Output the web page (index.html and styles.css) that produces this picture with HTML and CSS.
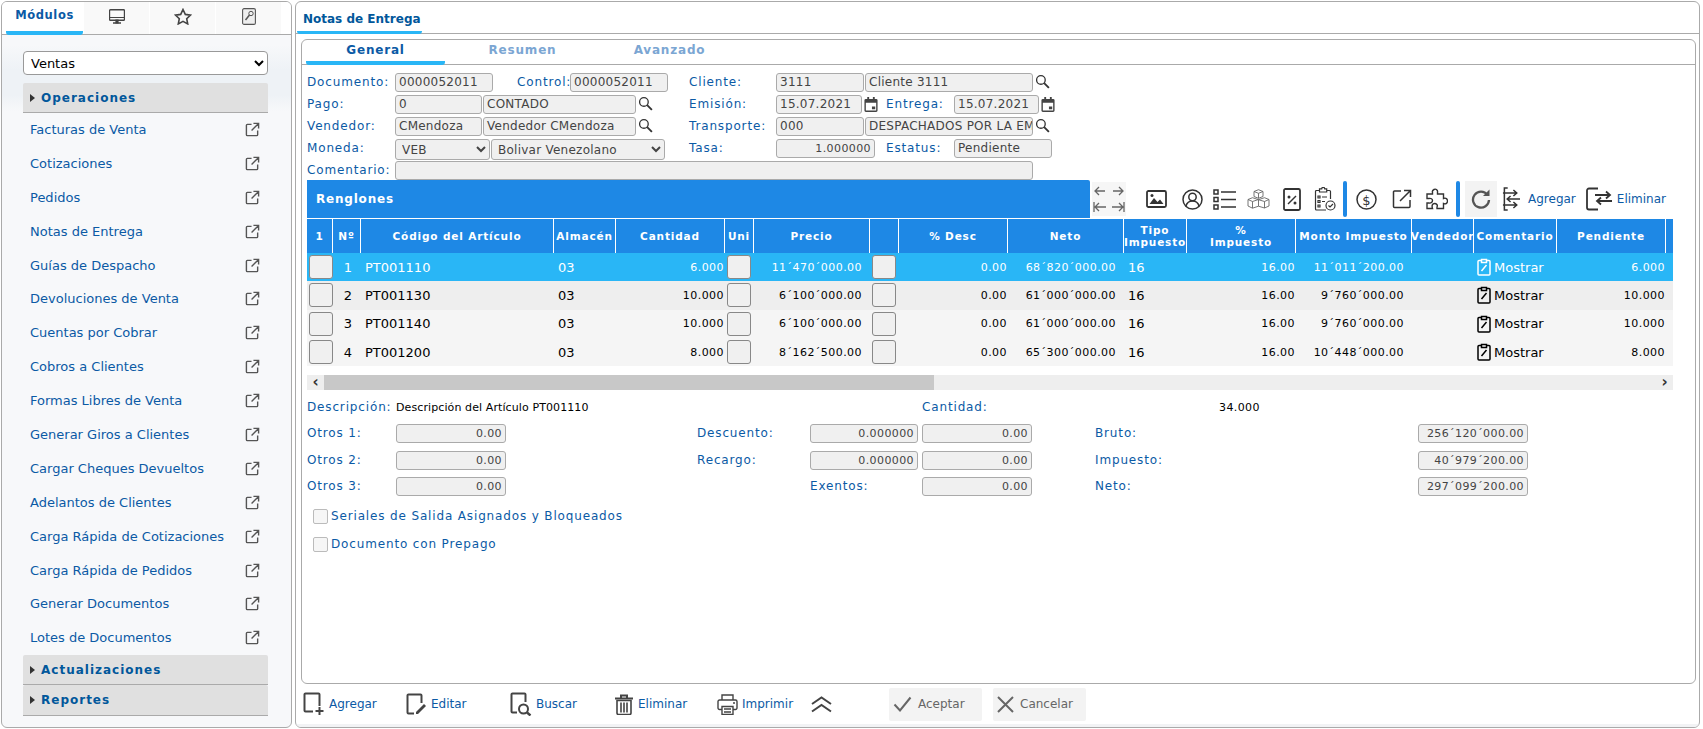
FILE: index.html
```html
<!DOCTYPE html>
<html lang="es">
<head>
    <meta charset="UTF-8">
    <title>Notas de Entrega</title>
    <link rel="stylesheet" href="styles.css">
</head>
<body>
    <svg class="defs" width="0" height="0">
        <symbol id="i-ext" viewBox="0 0 16 16"><path d="M7 2.5H2.5a1 1 0 0 0-1 1v10a1 1 0 0 0 1 1h10a1 1 0 0 0 1-1V9M9 1.5h5.5V7M14.5 1.5 7 9" fill="none" stroke="currentColor" stroke-width="1.5"/></symbol>
        <symbol id="i-search" viewBox="0 0 16 16"><circle cx="6.3" cy="6.3" r="4.6" fill="none" stroke="currentColor" stroke-width="1.4"/><path d="m9.8 9.8 5 5" stroke="currentColor" stroke-width="2"/></symbol>
        <symbol id="i-cal" viewBox="0 0 14 16"><path d="M3 0h2v2h4V0h2v2h1.5A1.5 1.5 0 0 1 14 3.500V14.500A1.500 1.500 0 0 1 12.500 16h-11A1.500 1.500 0 0 1 0 14.500V3.500A1.500 1.500 0 0 1 1.500 2H3zM1.500 6v8.500h11V6zM8 10h3.500v3H8z" fill="currentColor" fill-rule="evenodd"/></symbol>
        <symbol id="i-note" viewBox="0 0 14 18"><path d="M4.500 2.500H2a1 1 0 0 0-1 1V16a1 1 0 0 0 1 1h10a1 1 0 0 0 1-1V3.500a1 1 0 0 0-1-1H9.500M4.500 1.500h5v3h-5zM4.500 13l5-6" fill="none" stroke="currentColor" stroke-width="1.5"/></symbol>
    </svg>

    <div class="app">
        <aside class="side">
            <div class="side-tabs">
                <div class="side-tab active">Módulos</div>
                <div class="side-tab">
                    <svg width="16" height="15" viewBox="0 0 16 15"><path d="M1.500.7h13a1 1 0 0 1 1 1v8.600a1 1 0 0 1-1 1h-13a1 1 0 0 1-1-1V1.700a1 1 0 0 1 1-1zM4 14h8" fill="none" stroke="#444" stroke-width="1.400"/><path d="M.5 8.500h15M7 11h2v3H7z" stroke="#444" stroke-width="1.200" fill="#444"/></svg>
                </div>
                <div class="side-tab">
                    <svg width="18" height="17" viewBox="0 0 18 17"><path d="m9 1.500 2.300 4.900 5.200.7-3.800 3.600 1 5.200L9 13.300l-4.700 2.600 1-5.200L1.500 7.100l5.200-.7z" fill="none" stroke="#444" stroke-width="1.600"/></svg>
                </div>
                <div class="side-tab">
                    <svg width="14" height="17" viewBox="0 0 14 17"><rect x=".6" y=".6" width="12.800" height="15.800" rx="1.500" fill="#eee" stroke="#555" stroke-width="1.100"/><circle cx="9" cy="5.500" r="2.200" fill="none" stroke="#555"/><path d="M7.500 7 3.500 12" stroke="#555" stroke-width="1.500"/></svg>
                </div>
            </div>
            <div class="side-body">
                <select class="module-select"><option>Ventas</option></select>
                <div class="group first"><span class="caret"></span>Operaciones</div>
                <ul class="links">
                    <li>Facturas de Venta<svg class="ext"><use href="#i-ext"/></svg></li>
                    <li>Cotizaciones<svg class="ext"><use href="#i-ext"/></svg></li>
                    <li>Pedidos<svg class="ext"><use href="#i-ext"/></svg></li>
                    <li>Notas de Entrega<svg class="ext"><use href="#i-ext"/></svg></li>
                    <li>Guías de Despacho<svg class="ext"><use href="#i-ext"/></svg></li>
                    <li>Devoluciones de Venta<svg class="ext"><use href="#i-ext"/></svg></li>
                    <li>Cuentas por Cobrar<svg class="ext"><use href="#i-ext"/></svg></li>
                    <li>Cobros a Clientes<svg class="ext"><use href="#i-ext"/></svg></li>
                    <li>Formas Libres de Venta<svg class="ext"><use href="#i-ext"/></svg></li>
                    <li>Generar Giros a Clientes<svg class="ext"><use href="#i-ext"/></svg></li>
                    <li>Cargar Cheques Devueltos<svg class="ext"><use href="#i-ext"/></svg></li>
                    <li>Adelantos de Clientes<svg class="ext"><use href="#i-ext"/></svg></li>
                    <li>Carga Rápida de Cotizaciones<svg class="ext"><use href="#i-ext"/></svg></li>
                    <li>Carga Rápida de Pedidos<svg class="ext"><use href="#i-ext"/></svg></li>
                    <li>Generar Documentos<svg class="ext"><use href="#i-ext"/></svg></li>
                    <li>Lotes de Documentos<svg class="ext"><use href="#i-ext"/></svg></li>
                </ul>
                <div class="group"><span class="caret"></span>Actualizaciones</div>
                <div class="group"><span class="caret"></span>Reportes</div>
            </div>
        </aside>

        <main class="main">
            <div class="main-tabs"><div class="main-tab">Notas de Entrega</div></div>

            <section class="doc">
                <div class="doc-tabs">
                    <div class="doc-tab active">General</div>
                    <div class="doc-tab">Resumen</div>
                    <div class="doc-tab">Avanzado</div>
                </div>

                <div class="form">
                    <div class="form-row">
                        <div class="form-left">
                            <span class="lbl">Documento:</span><span class="fld w98">0000052011</span>
                            <span class="lbl-mid">Control:</span><span class="fld w98">0000052011</span>
                        </div>
                        <div class="form-right">
                            <span class="lbl-right">Cliente:</span><span class="fld w88">3111</span><span class="fld w168">Cliente 3111</span>
                            <svg class="search"><use href="#i-search"/></svg>
                        </div>
                    </div>
                    <div class="form-row">
                        <div class="form-left">
                            <span class="lbl">Pago:</span><span class="fld w87">0</span><span class="fld w153">CONTADO</span>
                            <svg class="search"><use href="#i-search"/></svg>
                        </div>
                        <div class="form-right">
                            <span class="lbl-right">Emisión:</span>
                            <div class="cell-a"><span class="fld w86">15.07.2021</span><svg class="cal"><use href="#i-cal"/></svg></div>
                            <span class="lbl-sub">Entrega:</span><span class="fld w85">15.07.2021</span><svg class="cal"><use href="#i-cal"/></svg>
                        </div>
                    </div>
                    <div class="form-row">
                        <div class="form-left">
                            <span class="lbl">Vendedor:</span><span class="fld w87">CMendoza</span><span class="fld w153">Vendedor CMendoza</span>
                            <svg class="search"><use href="#i-search"/></svg>
                        </div>
                        <div class="form-right">
                            <span class="lbl-right">Transporte:</span><span class="fld w88">000</span><span class="fld w168">DESPACHADOS POR LA EMPRESA</span>
                            <svg class="search"><use href="#i-search"/></svg>
                        </div>
                    </div>
                    <div class="form-row">
                        <div class="form-left">
                            <span class="lbl">Moneda:</span>
                            <select class="sel w95"><option>VEB</option></select>
                            <select class="sel w174"><option>Bolivar Venezolano</option></select>
                        </div>
                        <div class="form-right">
                            <span class="lbl-right">Tasa:</span>
                            <div class="cell-a"><span class="fld w99 num">1.000000</span></div>
                            <span class="lbl-sub">Estatus:</span><span class="fld w98">Pendiente</span>
                        </div>
                    </div>
                    <div class="form-row-wide">
                        <span class="lbl">Comentario:</span><span class="fld w638"></span>
                    </div>
                </div>

                <div class="bar">
                    <div class="bar-title">Renglones</div>
                    <div class="bar-tools">
                        <div class="arrows">
                            <svg width="34" height="34" viewBox="0 0 34 34"><path d="M3 9h10M7 5 3 9l4 4M21 9h10M27 5l4 4-4 4M3 25h11M7 21l-4 4 4 4M2 20v10M20 25h11M27 21l4 4-4 4M32 20v10" fill="none" stroke="#666" stroke-width="1.300"/></svg>
                        </div>
                        <svg class="tool t1" width="21" height="18" viewBox="0 0 21 18"><rect x="1" y="1" width="19" height="16" rx="1.500" fill="none" stroke="#333" stroke-width="1.800"/><path d="m3.500 14 4.500-6 3.500 4 2.500-2.500 3.500 4.500z" fill="#333"/><circle cx="6" cy="5.500" r="1.500" fill="#333"/></svg>
                        <svg class="tool t2" width="21" height="21" viewBox="0 0 21 21"><circle cx="10.500" cy="10.500" r="9.500" fill="none" stroke="#333" stroke-width="1.500"/><circle cx="10.500" cy="8" r="3.700" fill="none" stroke="#333" stroke-width="1.500"/><path d="M4 17c1-3.500 3.500-5 6.500-5s5.500 1.500 6.500 5" fill="none" stroke="#333" stroke-width="1.500"/></svg>
                        <svg class="tool t3" width="23" height="21" viewBox="0 0 23 21"><path d="M1 1h4v4H1zM1 8.500h4v4H1zM1 16h4v4H1zM8 3h15M8 10.500h15M8 18h15" fill="none" stroke="#333" stroke-width="1.500"/></svg>
                        <svg class="tool t4" width="23" height="20" viewBox="0 0 23 20"><path d="M7 2.500 11.500.7 16 2.500v5l-4.500 1.800L7 7.500zM7 2.500l4.500 1.800L16 2.500M11.500 4.300v5M1 10.500l4.500-1.800 6 2v6.500l-6 2L1 17zM1 10.500l4.500 2 6-2M5.500 12.500v6.500M11.500 10.700l6-2 4.500 1.800V17l-4.500 2-6-1.800M11.500 10.700l6 1.800 4.500-2M17.500 12.500V19" fill="none" stroke="#666" stroke-width=".9"/></svg>
                        <svg class="tool t5" width="18" height="23" viewBox="0 0 18 23"><rect x="1" y="1" width="16" height="21" rx="1.500" fill="none" stroke="#333" stroke-width="1.800"/><path d="m5 16 8-8" stroke="#333" stroke-width="1.500"/><circle cx="6" cy="9" r="1.500" fill="#333"/><circle cx="12" cy="15" r="1.500" fill="#333"/></svg>
                        <svg class="tool t6" width="22" height="24" viewBox="0 0 22 24"><path d="M5.500 3.500H2.500a1 1 0 0 0-1 1V22a1 1 0 0 0 1 1H12M12.500 3.500h3a1 1 0 0 1 1 1V12M5.500 4V1.800h2.200a1.500 1.500 0 0 1 3 0h2V5h-7.200zM4 9h2v2H4zM4 13.500h2v2H4zM4 18h2v2H4zM8 10h5M8 14.500h3" fill="none" stroke="#333" stroke-width="1.200"/><circle cx="16.500" cy="18.500" r="4.500" fill="#fff" stroke="#333" stroke-width="1.200"/><path d="m14.500 18.500 1.500 1.500 3-3" fill="none" stroke="#333" stroke-width="1.200"/></svg>
                        <span class="tool-sep s1"></span>
                        <svg class="tool t7" width="21" height="21" viewBox="0 0 21 21"><circle cx="10.500" cy="10.500" r="9.500" fill="none" stroke="#333" stroke-width="1.500"/><text x="10.500" y="15.500" class="dollar">$</text></svg>
                        <svg class="tool t8" width="20" height="20" viewBox="0 0 20 20"><path d="M9 2H2.500a1 1 0 0 0-1 1v14.500a1 1 0 0 0 1 1H17a1 1 0 0 0 1-1V11M12 1.500h6.500V8M18.500 1.500 8 12" fill="none" stroke="#333" stroke-width="1.500"/></svg>
                        <svg class="tool t9" width="22" height="22" viewBox="0 0 22 22"><path d="M8 1.500c2-1 4 .5 3.500 3v1.500h6v4.500c2.500-1 4 .5 4 2.500s-1.500 3.500-4 2.500v5H11v-1.500c1-2-.5-3.500-2.500-3.500S5.500 17.500 6.500 20.500H1v-5.500h2c2 .5 3.500-1 3.500-2.500S5 10 3 10.500H1V6h5.500V4.500C6 3 7 2 8 1.500z" fill="none" stroke="#333" stroke-width="1.400"/></svg>
                        <span class="tool-sep s2"></span>
                        <div class="refresh">
                            <svg width="20" height="20" viewBox="0 0 20 20"><path d="M16.500 6A8 8 0 1 0 18 11" fill="none" stroke="#555" stroke-width="2.300"/><path d="M12 7h6.500V.5z" fill="#555"/></svg>
                        </div>
                        <svg class="tool t10" width="20" height="24" viewBox="0 0 20 24"><path d="M6 1H2.500v22H6M1 6h14M12 3l3.500 3-3.500 3M19 12H6M9 9l-3.500 3L9 15M1 18h14M12 15l3.500 3-3.500 3" fill="none" stroke="#333" stroke-width="1.600" transform="translate(2 0) scale(.95 1)"/></svg>
                        <span class="tool-text t-add">Agregar</span>
                        <svg class="tool t11" width="28" height="24" viewBox="0 0 28 24"><path d="M12 1.500H3a2 2 0 0 0-2 2v17a2 2 0 0 0 2 2h9M9 8h15M20 4.500 24 8l-4 3.500M26 14H11M15 10.500 11 14l4 3.500" fill="none" stroke="#333" stroke-width="1.800"/></svg>
                        <span class="tool-text">Eliminar</span>
                    </div>
                </div>

                <div class="grid">
                    <div class="grid-head">
                        <div>1</div><div>Nº</div><div>Código del Artículo</div><div>Almacén</div><div>Cantidad</div><div>Uni</div><div>Precio</div><div></div><div>% Desc</div><div>Neto</div><div>Tipo Impuesto</div><div>%<br>Impuesto</div><div>Monto Impuesto</div><div>Vendedor</div><div>Comentario</div><div>Pendiente</div><div></div>
                    </div>
                    <div class="grid-row selected">
                        <div class="c-btn"><span class="cell-btn"></span></div><div class="c-no">1</div><div class="c-txt">PT001110</div><div class="c-txt">03</div><div class="c-num tight">6.000</div><div class="c-btn"><span class="cell-btn"></span></div><div class="c-num">11´470´000.00</div><div class="c-btn"><span class="cell-btn"></span></div><div class="c-num tight">0.00</div><div class="c-num">68´820´000.00</div><div class="c-txt">16</div><div class="c-num tight">16.00</div><div class="c-num">11´011´200.00</div><div></div><div class="c-note"><svg class="note"><use href="#i-note"/></svg>Mostrar</div><div class="c-num tight">6.000</div><div></div>
                    </div>
                    <div class="grid-row">
                        <div class="c-btn"><span class="cell-btn"></span></div><div class="c-no">2</div><div class="c-txt">PT001130</div><div class="c-txt">03</div><div class="c-num tight">10.000</div><div class="c-btn"><span class="cell-btn"></span></div><div class="c-num">6´100´000.00</div><div class="c-btn"><span class="cell-btn"></span></div><div class="c-num tight">0.00</div><div class="c-num">61´000´000.00</div><div class="c-txt">16</div><div class="c-num tight">16.00</div><div class="c-num">9´760´000.00</div><div></div><div class="c-note"><svg class="note"><use href="#i-note"/></svg>Mostrar</div><div class="c-num tight">10.000</div><div></div>
                    </div>
                    <div class="grid-row">
                        <div class="c-btn"><span class="cell-btn"></span></div><div class="c-no">3</div><div class="c-txt">PT001140</div><div class="c-txt">03</div><div class="c-num tight">10.000</div><div class="c-btn"><span class="cell-btn"></span></div><div class="c-num">6´100´000.00</div><div class="c-btn"><span class="cell-btn"></span></div><div class="c-num tight">0.00</div><div class="c-num">61´000´000.00</div><div class="c-txt">16</div><div class="c-num tight">16.00</div><div class="c-num">9´760´000.00</div><div></div><div class="c-note"><svg class="note"><use href="#i-note"/></svg>Mostrar</div><div class="c-num tight">10.000</div><div></div>
                    </div>
                    <div class="grid-row">
                        <div class="c-btn"><span class="cell-btn"></span></div><div class="c-no">4</div><div class="c-txt">PT001200</div><div class="c-txt">03</div><div class="c-num tight">8.000</div><div class="c-btn"><span class="cell-btn"></span></div><div class="c-num">8´162´500.00</div><div class="c-btn"><span class="cell-btn"></span></div><div class="c-num tight">0.00</div><div class="c-num">65´300´000.00</div><div class="c-txt">16</div><div class="c-num tight">16.00</div><div class="c-num">10´448´000.00</div><div></div><div class="c-note"><svg class="note"><use href="#i-note"/></svg>Mostrar</div><div class="c-num tight">8.000</div><div></div>
                    </div>
                    <div class="scroll">
                        <span class="scroll-btn">‹</span>
                        <span class="scroll-thumb"></span>
                        <span class="scroll-btn end">›</span>
                    </div>
                </div>

                <div class="totals">
                    <span class="lbl t-c1">Descripción:</span><span class="desc">Descripción del Artículo PT001110</span>
                    <span class="lbl t-c7">Cantidad:</span><span class="qty">34.000</span>

                    <span class="lbl t-c1">Otros 1:</span><span class="fld num t-c2">0.00</span>
                    <span class="lbl t-c4">Descuento:</span><span class="fld num t-c5">0.000000</span><span class="fld num t-c7">0.00</span>
                    <span class="lbl t-c9">Bruto:</span><span class="fld num t-c10">256´120´000.00</span>

                    <span class="lbl t-c1">Otros 2:</span><span class="fld num t-c2">0.00</span>
                    <span class="lbl t-c4">Recargo:</span><span class="fld num t-c5">0.000000</span><span class="fld num t-c7">0.00</span>
                    <span class="lbl t-c9">Impuesto:</span><span class="fld num t-c10">40´979´200.00</span>

                    <span class="lbl t-c1">Otros 3:</span><span class="fld num t-c2">0.00</span>
                    <span class="lbl t-c5">Exentos:</span><span class="fld num t-c7">0.00</span>
                    <span class="lbl t-c9">Neto:</span><span class="fld num t-c10">297´099´200.00</span>
                </div>

                <div class="checks">
                    <label class="check"><span class="box"></span>Seriales de Salida Asignados y Bloqueados</label>
                    <label class="check"><span class="box"></span>Documento con Prepago</label>
                </div>
            </section>

            <footer class="actions">
                <div class="act a-add">
                    <svg width="22" height="24" viewBox="0 0 22 24"><path d="M10 19.500H2.500a1 1 0 0 1-1-1V2.500a1 1 0 0 1 1-1h13a1 1 0 0 1 1 1V14" fill="none" stroke="#444" stroke-width="2"/><path d="M16.500 15v8M12.500 19h8" stroke="#444" stroke-width="2"/></svg>Agregar
                </div>
                <div class="act a-edit">
                    <svg width="21" height="22" viewBox="0 0 21 22"><path d="M8 20.500H2.500a1 1 0 0 1-1-1V2.500a1 1 0 0 1 1-1h12a1 1 0 0 1 1 1V10" fill="none" stroke="#444" stroke-width="2"/><path d="m10 19 8-8 2 2-8 8h-2z" fill="#444"/></svg>Editar
                </div>
                <div class="act a-find">
                    <svg width="22" height="24" viewBox="0 0 22 24"><path d="M7 20.500H2.500a1 1 0 0 1-1-1V2.500a1 1 0 0 1 1-1h12a1 1 0 0 1 1 1V10" fill="none" stroke="#444" stroke-width="2"/><circle cx="13.500" cy="17" r="4.500" fill="none" stroke="#444" stroke-width="2"/><path d="m17 20.500 3.500 3" stroke="#444" stroke-width="2.400"/></svg>Buscar
                </div>
                <div class="act a-del">
                    <svg width="20" height="21" viewBox="0 0 20 21"><path d="M1 4.500h18M7 4V1.500h6V4" fill="none" stroke="#444" stroke-width="2"/><path d="M3 6.500h14V19a1.500 1.500 0 0 1-1.500 1.500h-11A1.500 1.500 0 0 1 3 19z" fill="none" stroke="#444" stroke-width="1.600"/><path d="M7 8.500v10M10 8.500v10M13 8.500v10" stroke="#444" stroke-width="1.600"/></svg>Eliminar
                </div>
                <div class="act a-print">
                    <svg width="21" height="21" viewBox="0 0 21 21"><path d="M5 6V1h11v5M5 15.500H2.500a1.500 1.500 0 0 1-1.500-1.500V7.500A1.500 1.500 0 0 1 2.500 6h16A1.500 1.500 0 0 1 20 7.500V14a1.500 1.500 0 0 1-1.500 1.500H16M5 12.500h11v8H5zM7 15h7M7 18h7" fill="none" stroke="#444" stroke-width="1.400"/><circle cx="17" cy="9" r="1" fill="#444"/></svg>Imprimir
                </div>
                <svg class="collapse" width="21" height="17" viewBox="0 0 21 17"><path d="M1 8 10.500 1.500 20 8M1 15.500 10.500 9 20 15.500" fill="none" stroke="#444" stroke-width="2"/></svg>
                <div class="act-btn b-ok">
                    <svg width="19" height="16" viewBox="0 0 19 16"><path d="m1.500 8.500 5.500 6L17.500 1.500" fill="none" stroke="#666" stroke-width="2"/></svg>Aceptar
                </div>
                <div class="act-btn">
                    <svg width="17" height="17" viewBox="0 0 17 17"><path d="m1 1 15 15M16 1 1 16" fill="none" stroke="#666" stroke-width="2"/></svg>Cancelar
                </div>
            </footer>
            <div class="main-foot"></div>
        </main>
    </div>
</body>
</html>
```

FILE: styles.css
```css
* {
    box-sizing: border-box;
}
html, body {
    height: 100%;
}
body {
    margin: 0;
    background: #fff;
    font-family: "DejaVu Sans", Verdana, sans-serif;
    font-size: 12px;
    color: #333;
    overflow: hidden;
}
.defs {
    position: absolute;
}
.app {
    display: flex;
    gap: 3px;
    height: 728px;
    padding: 1px 3px 0 1px;
}

/* left panel */
.side {
    width: 291px;
    flex: none;
    border: 1px solid #aaa;
    border-radius: 6px;
    background: #f7f8fa;
    overflow: hidden;
}
.side-tabs {
    display: flex;
    height: 33px;
    padding-left: 4px;
    border-bottom: 1px solid #aaa;
    background: #fff;
}
.side-tab {
    width: 65px;
    margin-left: 1px;
    display: flex;
    align-items: center;
    justify-content: center;
    background: #f9f9f9;
}
.side-tab.active {
    width: 77px;
    margin: 0;
    padding-bottom: 4px;
    border-bottom: 4px solid #29b6f6;
    border-radius: 0 0 3px 3px;
    background: #fff;
    height: 33px;
    color: #0b5aa5;
    font-weight: bold;
    font-size: 11.500px;
    letter-spacing: .6px;
}
.side-tab svg {
    margin-bottom: 3px;
}
.side-body {
    padding: 16px 24px 0 21px;
    background: linear-gradient(#f7f8fa 10px, #eef2f6 35px, #eef2f6 60px, #f7f8fa 76px);
}
.module-select {
    display: block;
    width: 245px;
    height: 24px;
    padding-left: 3px;
    border: 1px solid #999;
    border-radius: 4px;
    background: #fff;
    color: #000;
    font-family: inherit;
    font-size: 13px;
}
.group {
    width: 245px;
    height: 30px;
    display: flex;
    align-items: center;
    padding-left: 7px;
    background: #e0e0e0;
    border-bottom: 1px solid #aaa;
    border-radius: 2px 2px 0 0;
    color: #01579b;
    font-weight: bold;
    font-size: 12px;
    letter-spacing: 1px;
}
.group + .group {
    height: 31px;
}
.group.first {
    margin-top: 8px;
}
.caret {
    width: 0;
    height: 0;
    margin-right: 6px;
    border-left: 5px solid #333;
    border-top: 4px solid transparent;
    border-bottom: 4px solid transparent;
}
.links {
    list-style: none;
    margin: 0;
    padding: 0;
    width: 245px;
}
.links li {
    position: relative;
    height: 33.900px;
    line-height: 34px;
    padding-left: 7px;
    color: #0b5aa5;
    font-size: 13px;
    white-space: nowrap;
    overflow: hidden;
}
.ext {
    position: absolute;
    right: 8px;
    top: 9px;
    width: 15px;
    height: 15px;
    color: #555;
    background: #f7f8fa;
}

/* right panel */
.main {
    flex: 1;
    display: flex;
    flex-direction: column;
    border: 1px solid #aaa;
    border-radius: 6px;
    overflow: hidden;
}
.main-tabs {
    height: 32px;
    padding-left: 1px;
    border-bottom: 1px solid #aaa;
}
.main-tab {
    width: 125px;
    height: 32px;
    padding: 10px 0 0 6px;
    border-bottom: 3px solid #29b6f6;
    border-radius: 0 0 3px 3px;
    color: #01579b;
    font-weight: bold;
    font-size: 12px;
    line-height: 14px;
}
.doc {
    height: 645px;
    margin: 5px 3px 0 5px;
    border: 1px solid #aaa;
    border-radius: 6px;
    flex: none;
}
.doc-tabs {
    display: flex;
    height: 25px;
    padding-left: 4px;
    border-bottom: 1px solid #aaa;
}
.doc-tab {
    width: 139px;
    height: 25px;
    padding-top: 3px;
    margin-right: 8px;
    text-align: center;
    color: #7ba6d3;
    font-weight: bold;
    font-size: 12px;
    letter-spacing: .8px;
}
.doc-tab.active {
    border-bottom: 4px solid #29b6f6;
    border-radius: 0 0 3px 3px;
    color: #0b5aa5;
}

/* form */
.form {
    padding: 8px 0 0 5px;
}
.form-row {
    display: grid;
    grid-template-columns: 360px 1fr;
    height: 22px;
}
.form-left, .form-right, .form-row-wide, .cell-a {
    display: flex;
    align-items: flex-start;
}
.cell-a {
    width: 110px;
}
.lbl, .lbl-mid, .lbl-right, .lbl-sub {
    flex: none;
    color: #0b5aa5;
    letter-spacing: .85px;
    line-height: 19px;
    white-space: nowrap;
}
.lbl {
    width: 88px;
}
.lbl-mid {
    width: 76px;
    padding-left: 23px;
}
.lbl-right {
    width: 109px;
    padding-left: 22px;
}
.lbl-sub {
    width: 68px;
}
.fld {
    flex: none;
    height: 19px;
    margin-right: 1px;
    padding: 0 3px;
    border: 1px solid #aaa;
    border-radius: 3px;
    background: #f0f0f0;
    color: #444;
    font-size: 12px;
    letter-spacing: .25px;
    line-height: 17px;
    white-space: nowrap;
    overflow: hidden;
}
.num {
    text-align: right;
    font-size: 11px;
    letter-spacing: .4px;
}
.w85 { width: 85px; }
.w86 { width: 86px; }
.w87 { width: 87px; }
.w88 { width: 88px; }
.w98 { width: 98px; }
.w99 { width: 99px; }
.w153 { width: 153px; }
.w168 { width: 168px; }
.w638 { width: 638px; }
.sel {
    flex: none;
    height: 21px;
    margin-right: 1px;
    padding-left: 2px;
    border: 1px solid #aaa;
    border-radius: 3px;
    background: #f0f0f0;
    color: #444;
    font-family: inherit;
    font-size: 12px;
    letter-spacing: .25px;
}
.w95 { width: 95px; }
.w174 { width: 174px; }
.search {
    flex: none;
    width: 15px;
    height: 15px;
    margin: 1px 0 0 1px;
    color: #333;
}
.cal {
    flex: none;
    width: 14px;
    height: 15px;
    margin: 2px 0 0 1px;
    color: #444;
}

/* renglones bar */
.bar {
    display: flex;
    height: 38px;
    margin: 0 0 0 5px;
    position: relative;
}
.bar-title {
    width: 783px;
    flex: none;
    padding-left: 9px;
    line-height: 38px;
    background: #1e88e5;
    border-radius: 0 2px 0 0;
    color: #fff;
    font-weight: bold;
    font-size: 12px;
    letter-spacing: .8px;
}
.bar-tools {
    flex: 1;
    display: flex;
    align-items: center;
    height: 38px;
}
.arrows {
    width: 34px;
    height: 34px;
    margin-left: 2px;
    background: #f6f6f6;
}
.tool {
    flex: none;
}
.t1 { margin-left: 20px; }
.t2 { margin-left: 15px; }
.t3 { margin-left: 10px; }
.t4 { margin-left: 11px; }
.t5 { margin-left: 13px; }
.t6 { margin-left: 13px; }
.tool-sep {
    flex: none;
    width: 4px;
    height: 36px;
    border-radius: 2px;
    background: #1e88e5;
}
.s1 { margin-left: 7px; }
.s2 { margin-left: 8px; }
.t7 { margin-left: 9px; }
.t8 { margin-left: 15px; }
.t9 { margin-left: 14px; }
.dollar {
    fill: #333;
    font-size: 13px;
    text-anchor: middle;
}
.refresh {
    flex: none;
    width: 32px;
    height: 36px;
    margin-left: 5px;
    display: flex;
    align-items: center;
    justify-content: center;
    background: #f3f3f3;
}
.t10 { margin-left: 3px; }
.tool-text {
    flex: none;
    margin-left: 3px;
    color: #0b5aa5;
    font-size: 12px;
}
.t-add { margin-left: 8px; }
.t11 { margin-left: 10px; }

/* grid */
.grid {
    width: 1366px;
    margin-left: 5px;
}
.grid-head, .grid-row {
    display: grid;
    grid-template-columns: 26px 28px 193px 62px 109px 29px 116px 29px 109px 116px 63px 109px 116px 62px 83px 109px 7px;
}
.grid-head {
    height: 35px;
    background: #1e88e5;
    border-top: 1px solid #fff;
}
.grid-head div {
    display: flex;
    align-items: center;
    justify-content: center;
    border-right: 1px solid #fff;
    color: #fff;
    font-weight: bold;
    font-size: 10.500px;
    letter-spacing: .85px;
    line-height: 12px;
    text-align: center;
    white-space: nowrap;
}
.grid-head div:nth-child(11),
.grid-head div:nth-child(12) {
    white-space: normal;
    padding-bottom: 1px;
}
.grid-head div:last-child {
    border-right: 0;
}
.grid-row {
    height: 28.300px;
    align-items: center;
    background: #f5f5f5;
    color: #000;
    font-size: 13px;
}
.grid-row:nth-child(odd) {
    background: #eee;
}
.grid-row:nth-child(5) {
    background: #f5f5f5;
}
.grid-row.selected {
    background: #29b6f6;
    color: #fff;
}
.c-btn {
    padding-left: 2px;
    height: 24px;
}
.cell-btn {
    display: block;
    width: 24px;
    height: 24px;
    border: 1px solid #888;
    border-radius: 3px;
    background: #f0f0f0;
}
.c-no {
    text-align: right;
    padding-right: 9px;
}
.c-txt {
    padding-left: 4px;
}
.c-num {
    text-align: right;
    padding-right: 8px;
    font-size: 11px;
    letter-spacing: .45px;
}
.c-num.tight {
    padding-right: 1px;
}
.c-note {
    display: flex;
    align-items: center;
    padding-left: 3px;
}
.note {
    width: 14px;
    height: 18px;
    margin-right: 3px;
}
.scroll {
    display: flex;
    align-items: center;
    height: 15px;
    margin-top: 9px;
    background: #eee;
    color: #333;
}
.scroll-btn {
    width: 17px;
    text-align: center;
    font-size: 15px;
    font-weight: bold;
    line-height: 15px;
}
.scroll-btn.end {
    margin-left: auto;
}
.scroll-thumb {
    width: 610px;
    height: 15px;
    background: #c8c8c8;
}

/* totals */
.totals {
    display: grid;
    grid-template-columns: 89px 120px 181px 113px 108px 4px 119px 54px 323px 119px;
    grid-auto-rows: 20px;
    row-gap: 6.500px;
    align-items: center;
    padding: 7px 0 0 5px;
}
.t-c1 { grid-column: 1; }
.t-c2 { grid-column: 2; width: 110px; }
.t-c4 { grid-column: 4; }
.t-c5 { grid-column: 5; }
.t-c7 { grid-column: 7; }
.t-c9 { grid-column: 9; }
.t-c10 { grid-column: 10; }
.desc {
    grid-column: 2 / 7;
    color: #000;
    font-size: 11px;
    letter-spacing: .1px;
}
.qty {
    grid-column: 9 / 11;
    padding-left: 124px;
    color: #000;
    font-size: 11px;
    letter-spacing: .4px;
}
.t-c5.fld {
    width: 108px;
}
.t-c7.fld {
    width: 110px;
}
.t-c10.fld {
    width: 110px;
}
.lbl.t-c7 {
    grid-column: 7 / 9;
    width: auto;
}
.lbl.t-c5 {
    grid-column: 5;
    width: auto;
}
.checks {
    padding: 11px 0 0 11px;
}
.check {
    display: flex;
    align-items: center;
    height: 16px;
    margin-bottom: 12px;
    color: #0b5aa5;
    letter-spacing: .85px;
}
.box {
    width: 15px;
    height: 15px;
    margin: 1px 3px 0 0;
    border: 1px solid #bbb;
    border-radius: 2px;
    background: #f6f6f6;
}

/* bottom actions */
.actions {
    flex: 1;
    display: flex;
    align-items: center;
    padding-left: 7px;
}
.act {
    display: flex;
    align-items: center;
    gap: 4px;
    flex: none;
    color: #0b5aa5;
    font-size: 12px;
}
.a-add { width: 103px; }
.a-edit { width: 104px; }
.a-find { width: 104px; }
.a-del { width: 103px; }
.a-print { width: 94px; }
.collapse {
    flex: none;
}
.act-btn {
    flex: none;
    width: 93px;
    height: 33px;
    margin-left: 11px;
    display: flex;
    align-items: center;
    gap: 6px;
    padding-left: 4px;
    border-radius: 2px;
    background: #f3f3f3;
    color: #666;
    font-size: 12px;
}
.b-ok {
    margin-left: 57px;
}
.main-foot {
    height: 3px;
    background: #f2f3f5;
}
```
